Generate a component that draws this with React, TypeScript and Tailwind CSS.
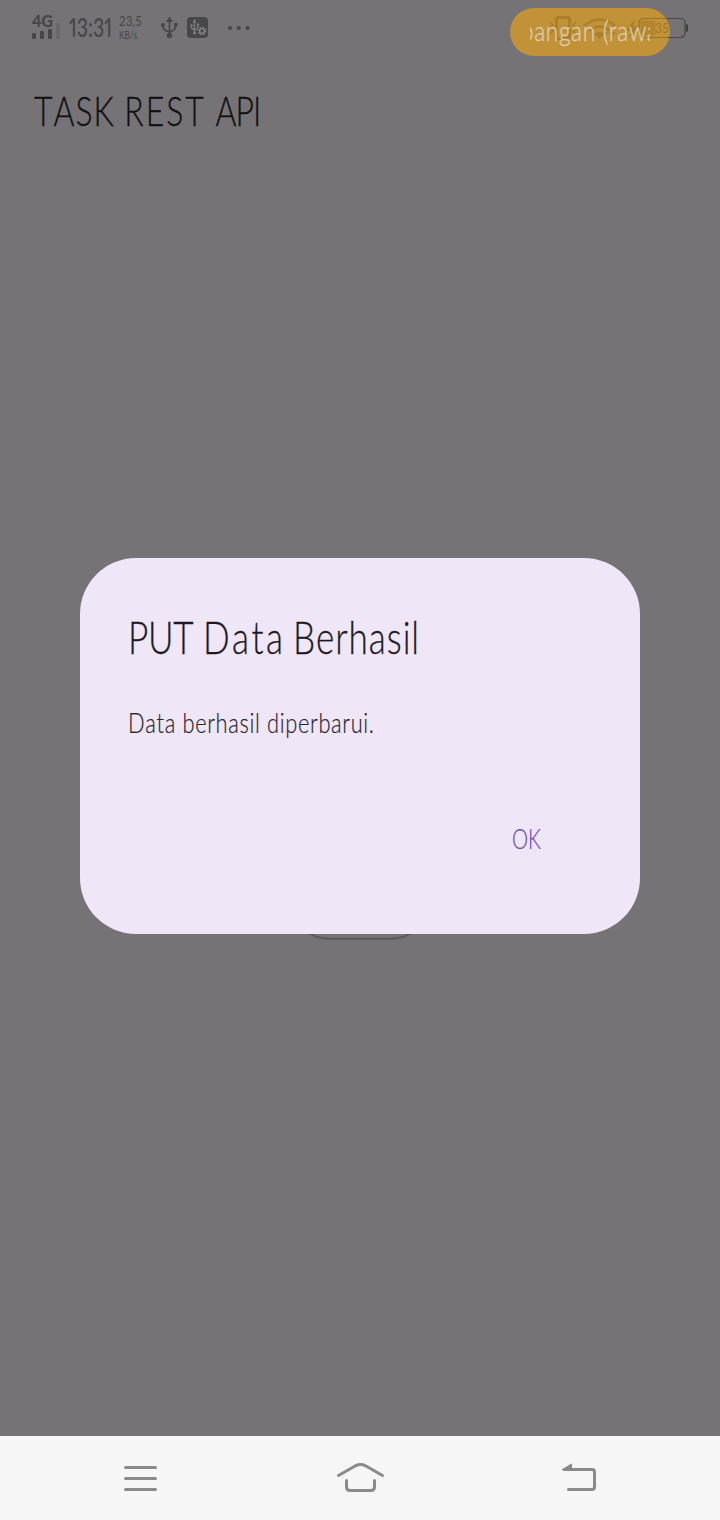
import React from "react";

function StatusBar() {
  return (
    <div className="relative flex h-14 items-start pl-8 text-[#474648]">
      <div className="w-7 pt-[13px]">
        <div className="h-4 w-0 origin-left scale-x-[0.95] whitespace-nowrap font-['Lato',sans-serif] text-[17px] leading-4 font-black">4G</div>
        <svg className="block" width="28" height="17" viewBox="0 0 28 17">
          <g fill="#474648">
            <rect x="0" y="4" width="4" height="6" rx="1" />
            <rect x="8" y="2" width="4" height="8" rx="1" />
            <rect x="16" y="0" width="4" height="10" rx="1" />
          </g>
        </svg>
      </div>
      <div className="-ml-1 mt-[23px] h-4 w-1 bg-[#6a686b]" />
      <div className="ml-[9px] w-[50px] pt-[13px]">
        <div className="w-0 origin-left scale-x-[0.75] whitespace-nowrap font-['Lato',sans-serif] text-[26px] leading-[29px] font-medium proportional-nums">13:31</div>
      </div>
      <div className="w-[41px] pt-[14px] font-['Lato',sans-serif]">
        <div className="w-0 origin-left scale-x-[0.84] text-[13.5px] leading-[14px] tracking-[0.2px]">23,5</div>
        <div className="w-0 origin-left scale-x-[0.7] text-[12px] leading-[14px]">KB/s</div>
      </div>
      <svg className="mt-4 block" width="90" height="24" viewBox="0 0 90 24">
        <g fill="none" stroke="#474648" strokeWidth="1.7">
          <path d="M9.5 3v17M3 9v2q0 3 6.500 5M15.500 8v3q0 3-6 5" />
        </g>
        <path d="M9.500 0.500L13 6H6z" fill="#474648" />
        <circle cx="9.500" cy="19.500" r="2.700" fill="#474648" />
        <circle cx="3" cy="9" r="2" fill="#474648" />
        <rect x="14" y="7" width="3.500" height="3.500" fill="#474648" />
        <rect x="27" y="1" width="21" height="21" rx="4" fill="#474648" />
        <g fill="none" stroke="#7f7d80" strokeWidth="1.300">
          <path d="M34.500 5v12M31.500 9v2q0 2 3 3M38 8v3q0 1.500-3 3" />
          <circle cx="42" cy="15" r="2.500" strokeWidth="1.700" />
          <circle cx="42" cy="15" r="3.800" strokeDasharray="1.400 1.584" />
        </g>
        <path d="M34.500 3l2 3.500h-4z" fill="#7f7d80" />
        <circle cx="34.500" cy="17" r="1.500" fill="#7f7d80" />
        <circle cx="31.500" cy="9.500" r="1.200" fill="#7f7d80" />
        <circle cx="38" cy="8.500" r="1.200" fill="#7f7d80" />
        <g fill="#474648">
          <circle cx="70" cy="12" r="2.100" />
          <circle cx="78.800" cy="12" r="2.100" />
          <circle cx="87.500" cy="12" r="2.100" />
        </g>
      </svg>
      <div className="absolute top-2 left-[510px] h-12 w-40 rounded-full bg-[#c19237]" />
      <svg className="absolute top-2 left-[540px]" width="152" height="40" viewBox="0 0 152 40">
        <g fill="none" stroke="#8c6417" strokeOpacity="0.4">
          <rect x="16.500" y="9.500" width="13" height="21" rx="2" strokeWidth="3" />
          <path d="M10 14l3 3-3 3 3 3-3 3M36 14l-3 3 3 3-3 3 3 3" strokeWidth="1.700" />
          <path d="M44 18q15.500-13 31 0M49 23q10.500-9 21 0" strokeWidth="2.300" />
          <path d="M66 25h9m-3-3l3 3-3 3" strokeWidth="1" />
        </g>
        <g fill="#8c6417" fillOpacity="0.4">
          <path d="M54 26q5.500-4 11 0l-5.500 5zM95 11L85 23h6l-3 8 11-13h-6z" />
          <rect x="100.500" y="12.500" width="15" height="15" rx="2" fillOpacity="0.250" />
        </g>
        <path d="M130 10.500H104q-5 0-5 5v9q0 5 5 5h25" fill="none" stroke="#8c6417" strokeOpacity="0.7" strokeWidth="1.200" />
        <path d="M127 10.500h13q5 0 5 5v9q0 5-5 5h-12" fill="none" stroke="#474648" strokeWidth="1.200" />
        <path d="M146 16q2 0 2 2v4q0 2-2 2z" fill="#3c423a" />
        <text x="115" y="25" fontFamily="Lato" fontSize="14" textLength="14" lengthAdjust="spacingAndGlyphs" fill="#8c6417" fillOpacity="0.55">35</text>
      </svg>
      <div className="absolute top-2 left-[530px] h-12 w-[120px] overflow-hidden">
        <div className="-ml-[9px] w-0 origin-left scale-x-[0.81] whitespace-nowrap font-['Lato',sans-serif] text-[28px] leading-[44px] font-light tracking-[0.8px] text-[#ddccb0] [-webkit-text-stroke:0.4px_#ddccb0]">bangan (rawan</div>
      </div>
    </div>
  );
}

function Dialog() {
  return (
    <section className="flex h-[376px] w-[560px] flex-col rounded-[56px] bg-[#efe6f7] px-12 font-['Lato',sans-serif] [font-kerning:none]">
      <h2 className="mt-[52px] w-0 origin-left scale-x-[0.78] whitespace-nowrap text-[45px] leading-[54px] font-light tracking-[1.2px] [word-spacing:-1px] text-[#1d1a22] [-webkit-text-stroke:0.3px_#1d1a22]">
        <span className="tracking-[-0.4px]">PUT</span> <span className="-mr-[3px] tracking-[3.2px]">Data</span> Berhasil
      </h2>
      <p className="mt-[42px] w-0 origin-left scale-x-[0.81] whitespace-nowrap text-[27px] leading-[34px] font-light tracking-[0.8px] text-[#28252e] [-webkit-text-stroke:0.2px_#28252e]">Data berhasil diperbarui.</p>
      <button className="mt-[82px] ml-[384px] w-0 origin-left scale-x-[0.75] whitespace-nowrap text-left text-[27px] leading-[34px] font-light text-[#6a48b5] [-webkit-text-stroke:0.2px_#6a48b5]">OK</button>
    </section>
  );
}

function NavBar() {
  return (
    <nav className="flex h-[84px] items-center bg-[#f6f6f6] pl-[120px]">
      <svg width="41" height="40" viewBox="0 0 41 40" fill="none" stroke="#8a8a8a" strokeWidth="3" strokeLinecap="round">
        <path d="M5.500 9.500h30M5.500 20.500h30M5.500 31.500h30" />
      </svg>
      <svg className="ml-[174px]" width="51" height="40" viewBox="0 0 51 40" fill="none" stroke="#8a8a8a" strokeWidth="3" strokeLinecap="round">
        <path d="M3.500 17.500L20.500 7.800q5-2.600 10 0L47.500 17.500M11.500 22.500v6.500q0 3.500 3.500 3.500h21q3.500 0 3.500-3.500v-6.500" />
      </svg>
      <svg className="ml-[174px]" width="40" height="40" viewBox="0 0 40 40" fill="none" stroke="#8a8a8a" strokeWidth="3" strokeLinecap="round">
        <path d="M4.500 11.500H32q2.500 0 2.500 2.500v15q0 2.500-2.500 2.500H8.500" />
        <path d="M2.500 11.500L11.500 6v5.500z" fill="#8a8a8a" strokeWidth="1" />
      </svg>
    </nav>
  );
}

export default function App() {
  return (
    <div className="relative flex h-[1520px] w-[720px] flex-col overflow-hidden bg-[#757376]">
      <StatusBar />
      <header className="h-28 pt-[29px] pl-[34px]">
        <h1 className="w-0 origin-left scale-x-[0.76] whitespace-nowrap font-['Lato',sans-serif] text-[42px] leading-[50px] font-light tracking-[1.3px] text-[#111012] [font-kerning:none] [-webkit-text-stroke:0.3px_#111012]">
          TASK <span className="tracking-[2.6px]">REST</span> <span className="tracking-[-1.2px]">API</span>
        </h1>
      </header>
      <main className="flex flex-1 flex-col items-center pt-[690px]">
        <div className="h-20 w-[142px] rounded-full bg-[#757376] shadow-[0_1px_2px_#454446]" />
      </main>
      <NavBar />
      <div className="absolute inset-x-0 top-[558px] flex justify-center">
        <Dialog />
      </div>
    </div>
  );
}
